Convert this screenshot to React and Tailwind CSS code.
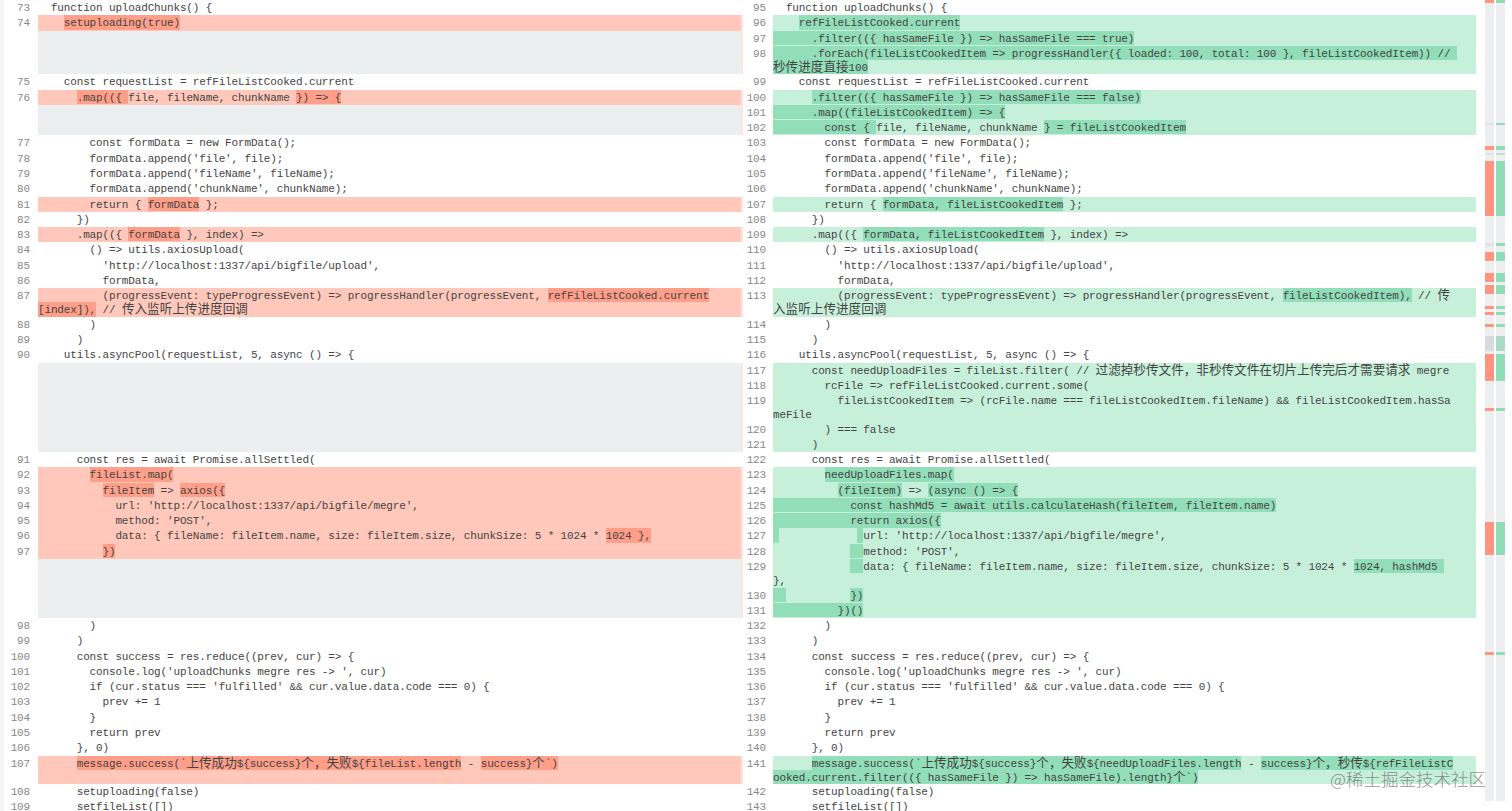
const fn = '  function uploadChunks() {';

// [left number, left text, right number, right text, kind]
// kind: l = left deleted, r = right added, b = both; ‹ › marks the word highlight
const rows = [
  [73, fn, 95, fn, ''],
  [74, '    ‹setuploading(true)›', 96, '    ‹refFileListCooked.current›', 'b'],
  [null, null, 97, '‹      .filter(({ hasSameFile }) => hasSameFile === true)›', 'r'],
  [null, null, 98, '‹      .forEach(fileListCookedItem => progressHandler({ loaded: 100, total: 100 }, fileListCookedItem)) // ›\n‹秒传进度直接100›', 'r'],
  [75, '    const requestList = refFileListCooked.current', 99, '    const requestList = refFileListCooked.current', ''],
  [76, '      ‹.map(({ ›file, fileName, chunkName ‹}) => {›', 100, '      ‹.filter(({ hasSameFile }) => hasSameFile === false)›', 'b'],
  [null, null, 101, '‹      .map((fileListCookedItem) => {›', 'r'],
  [null, null, 102, '‹        const { ›file, fileName, chunkName ‹} = fileListCookedItem›', 'r'],
  [77, '        const formData = new FormData();', 103, '        const formData = new FormData();', ''],
  [78, "        formData.append('file', file);", 104, "        formData.append('file', file);", ''],
  [79, "        formData.append('fileName', fileName);", 105, "        formData.append('fileName', fileName);", ''],
  [80, "        formData.append('chunkName', chunkName);", 106, "        formData.append('chunkName', chunkName);", ''],
  [81, '        return { ‹formData› };', 107, '        return { ‹formData, fileListCookedItem› };', 'b'],
  [82, '      })', 108, '      })', ''],
  [83, '      .map(({ ‹formData› }, index) =>', 109, '      .map(({ ‹formData, fileListCookedItem› }, index) =>', 'b'],
  [84, '        () => utils.axiosUpload(', 110, '        () => utils.axiosUpload(', ''],
  [85, "          'http://localhost:1337/api/bigfile/upload',", 111, "          'http://localhost:1337/api/bigfile/upload',", ''],
  [86, '          formData,', 112, '          formData,', ''],
  [87, '          (progressEvent: typeProgressEvent) => progressHandler(progressEvent, ‹refFileListCooked.current›\n‹[index]),› // 传入监听上传进度回调', 113, '          (progressEvent: typeProgressEvent) => progressHandler(progressEvent, ‹fileListCookedItem),› // 传\n入监听上传进度回调', 'b'],
  [88, '        )', 114, '        )', ''],
  [89, '      )', 115, '      )', ''],
  [90, '    utils.asyncPool(requestList, 5, async () => {', 116, '    utils.asyncPool(requestList, 5, async () => {', ''],
  [null, null, 117, '      const needUploadFiles = fileList.filter( // 过滤掉秒传文件，非秒传文件在切片上传完后才需要请求 megre', 'r'],
  [null, null, 118, '        rcFile => refFileListCooked.current.some(', 'r'],
  [null, null, 119, '          fileListCookedItem => (rcFile.name === fileListCookedItem.fileName) && fileListCookedItem.hasSa\nmeFile', 'r'],
  [null, null, 120, '        ) === false', 'r'],
  [null, null, 121, '      )', 'r'],
  [91, '      const res = await Promise.allSettled(', 122, '      const res = await Promise.allSettled(', ''],
  [92, '        ‹fileList.map(›', 123, '        ‹needUploadFiles.map(›', 'b'],
  [93, '          ‹fileItem› => ‹axios({›', 124, '          ‹(fileItem)› => ‹(async () => {›', 'b'],
  [94, "            url: 'http://localhost:1337/api/bigfile/megre',", 125, '‹            const hashMd5 = await utils.calculateHash(fileItem, fileItem.name)›', 'b'],
  [95, "            method: 'POST',", 126, '‹            return axios({›', 'b'],
  [96, '            data: { fileName: fileItem.name, size: fileItem.size, chunkSize: 5 * 1024 * ‹1024 },›', 127, "‹ ›            ‹ ›url: 'http://localhost:1337/api/bigfile/megre',", 'b'],
  [97, '          ‹})›', 128, "            ‹  ›method: 'POST',", 'b'],
  [null, null, 129, '            ‹  ›data: { fileName: fileItem.name, size: fileItem.size, chunkSize: 5 * 1024 * ‹1024, hashMd5 ›\n},', 'r'],
  [null, null, 130, '‹  ›          ‹})›', 'r'],
  [null, null, 131, '‹          })()›', 'r'],
  [98, '        )', 132, '        )', ''],
  [99, '      )', 133, '      )', ''],
  [100, '      const success = res.reduce((prev, cur) => {', 134, '      const success = res.reduce((prev, cur) => {', ''],
  [101, "        console.log('uploadChunks megre res -> ', cur)", 135, "        console.log('uploadChunks megre res -> ', cur)", ''],
  [102, "        if (cur.status === 'fulfilled' && cur.value.data.code === 0) {", 136, "        if (cur.status === 'fulfilled' && cur.value.data.code === 0) {", ''],
  [103, '          prev += 1', 137, '          prev += 1', ''],
  [104, '        }', 138, '        }', ''],
  [105, '        return prev', 139, '        return prev', ''],
  [106, '      }, 0)', 140, '      }, 0)', ''],
  [107, '      ‹message.success(`上传成功${success}个，失败${fileList.length› - ‹success}个`)›', 141, '      ‹message.success(`上传成功${success}个，失败${needUploadFiles.length› - ‹success}个，秒传${refFileListC›\n‹ooked.current.filter(({ hasSameFile }) => hasSameFile).length}个`)›', 'b'],
  [108, '      setuploading(false)', 142, '      setuploading(false)', ''],
  [109, '      setfileList([])', 143, '      setfileList([])', ''],
];

// overview ruler: [top, height, left colour, right colour]
const RED = '#ff9580';
const GREEN = '#8fdcb6';
const MUTED = '#dfe3e6';
const marks = [
  [0, 3, RED, GREEN],
  [123, 2, MUTED, GREEN],
  [146, 4, RED, GREEN],
  [153, 2, MUTED, '#c9dcd3'],
  [161, 55, RED, GREEN],
  [243, 3, MUTED, GREEN],
  [252, 9, RED, GREEN],
  [273, 9, RED, GREEN],
  [285, 9, RED, GREEN],
  [306, 3, RED, GREEN],
  [312, 3, RED, GREEN],
  [324, 3, RED, GREEN],
  [336, 15, '#d6dbde', '#a9dcc4'],
  [354, 27, RED, GREEN],
  [408, 3, RED, GREEN],
  [522, 33, RED, GREEN],
  [652, 3, RED, GREEN],
];

function Cjk({ text }) {
  return text.split(/([\u4e00-\u9fff，]+)/).map((part, i) =>
    i % 2 === 1 ? (
      <span key={i} className="text-[12.6px] leading-[0] tracking-normal font-['Noto_Sans_CJK_SC',sans-serif]">{part}</span>
    ) : (
      part
    )
  );
}

function CodeLine({ line, markClass }) {
  return (
    <div className="h-[14.3px] whitespace-pre">
      {line.split(/(‹[^›]*›)/).map((part, i) =>
        i % 2 === 1 ? (
          <span key={i} className={`inline-block h-[14.3px] align-top ${markClass}`}>
            <Cjk text={part.slice(1, -1)} />
          </span>
        ) : (
          <Cjk key={i} text={part} />
        )
      )}
    </div>
  );
}

function Code({ text, side, changed }) {
  let bg = 'bg-white';
  let markClass = '';
  if (text === null) bg = 'bg-[#ebeff0]';
  else if (changed && side === 'left') {
    bg = 'bg-[#ffc8ba]';
    markClass = 'bg-[#ff9f89]';
  } else if (changed) {
    bg = 'bg-[#c7f0da]';
    markClass = 'bg-[#91deb8]';
  }
  return (
    <div className={`${bg} w-[703px]`}>
      {text !== null && text.split('\n').map((line, i) => <CodeLine key={i} line={line} markClass={markClass} />)}
    </div>
  );
}

function Ruler() {
  return (
    <svg width="36" height="811" className="shrink-0">
      <rect x="9" y="0" width="9" height="801" fill="#eceef0" />
      <rect x="20" y="0" width="9" height="801" fill="#eceef0" />
      {marks.map(([y, h, left, right]) => (
        <g key={y}>
          <rect x="9" y={y} width="9" height={h} fill={left} />
          <rect x="20" y={y} width="9" height={h} fill={right} />
        </g>
      ))}
    </svg>
  );
}

export default function App() {
  return (
    <div className="relative flex w-[1512px] h-[811px] overflow-hidden bg-white text-[#444] text-[11px] leading-[16px] tracking-[-0.15px] font-['Liberation_Mono',monospace]">
      <div className="w-[1476px] shrink-0">
        {rows.map(([ln, lt, rn, rt, kind]) => (
          <div key={rn} className="flex min-h-[15.27px]">
            <div className="w-[38px] shrink-0 border-l-4 border-[#f5f6f6] pr-2 text-right text-[#888]">
              <div className="h-[14.3px]">{ln}</div>
            </div>
            <Code text={lt} side="left" changed={kind === 'l' || kind === 'b'} />
            <div className={`w-[32px] shrink-0 pr-[7px] text-right text-[#888] ${kind === 'r' || kind === 'b' ? 'border-l-2 border-[#fde4de]' : ''}`}>
              <div className="h-[14.3px]">{rn}</div>
            </div>
            <Code text={rt} side="right" changed={kind === 'r' || kind === 'b'} />
          </div>
        ))}
      </div>
      <Ruler />
      <div className="absolute left-[1330px] top-[768px] text-[17.5px] leading-[22px] tracking-normal font-light text-[#6b6b6b]/75 font-['Noto_Sans_CJK_SC',sans-serif]">
        @稀土掘金技术社区
      </div>
    </div>
  );
}
